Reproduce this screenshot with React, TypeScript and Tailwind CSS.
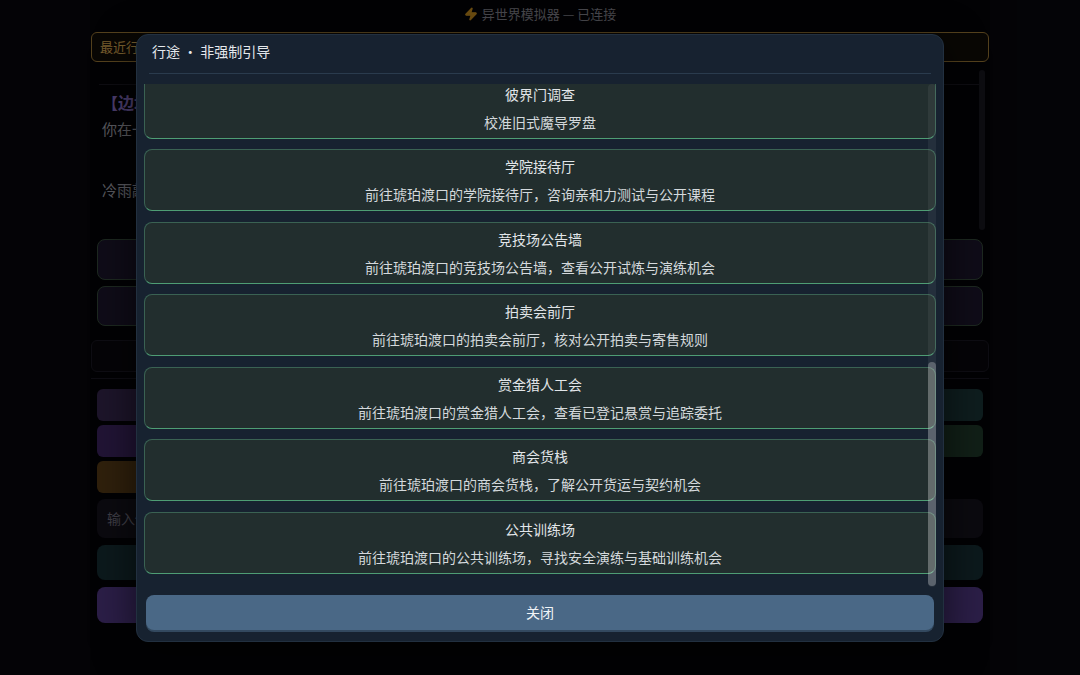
import { Zap } from 'lucide-react'

const routes = [
  { title: '彼界门调查', desc: '校准旧式魔导罗盘' },
  { title: '学院接待厅', desc: '前往琥珀渡口的学院接待厅，咨询亲和力测试与公开课程' },
  { title: '竞技场公告墙', desc: '前往琥珀渡口的竞技场公告墙，查看公开试炼与演练机会' },
  { title: '拍卖会前厅', desc: '前往琥珀渡口的拍卖会前厅，核对公开拍卖与寄售规则' },
  { title: '赏金猎人工会', desc: '前往琥珀渡口的赏金猎人工会，查看已登记悬赏与追踪委托' },
  { title: '商会货栈', desc: '前往琥珀渡口的商会货栈，了解公开货运与契约机会' },
  { title: '公共训练场', desc: '前往琥珀渡口的公共训练场，寻找安全演练与基础训练机会' }
]

function GameScreen() {
  return (
    <div className="mx-auto flex h-full w-[900px] flex-col bg-[#050408] px-[1px]">
      <div className="flex h-[28px] items-center justify-center gap-1 text-[13px] text-[#8e8e98]">
        <Zap className="h-3.5 w-3.5 fill-[#d99a22] text-[#d99a22]" />
        <span>异世界模拟器 — 已连接</span>
      </div>

      <div className="mt-[4px] flex h-[30px] items-center rounded-md border border-[#a9823a] bg-[#120e08] px-2 text-[13px] text-[#e8b85a]">
        最近行途
      </div>

      {/* story log */}
      <div className="relative mt-2 h-[162px] px-2">
        <div className="mt-[14px] border-t border-[#1c1a24]" />
        <div className="px-[3px] pt-[5px] text-[16px] font-bold text-[#9479d6]">【边境·琥珀渡口】</div>
        <div className="px-[3px] pt-[4px] text-[15px] text-[#b0b0bc]">你在一阵低沉的钟声中醒来，码头的灯火在雾里摇晃。</div>
        <div className="px-[3px] pt-[38px] text-[15px] text-[#b0b0bc]">冷雨敲打着石阶，远处传来商队的号角。</div>
        <div className="absolute right-[4px] top-0 h-[160px] w-[6px] rounded-full bg-[#1a1a22]" />
      </div>

      <div className="mt-[7px] flex flex-col gap-[6px] px-[6px]">
        <div className="h-[41px] rounded-lg border border-[#3a5140] bg-[#1e1830]" />
        <div className="h-[40px] rounded-lg border border-[#3a5140] bg-[#1e1830]" />
      </div>

      <div className="mt-[14px] h-[32px] rounded-md border border-[#1d1b26] bg-[#0a090e]" />
      <div className="mt-[6px] border-t border-[#1d1b26]" />

      <div className="mt-[10px] grid grid-cols-2 gap-x-[10px] gap-y-[4px] px-[6px]">
        <div className="h-[32px] rounded-md bg-[#3a2a54]" />
        <div className="h-[32px] rounded-md bg-[#1d3a3c]" />
        <div className="h-[32px] rounded-md bg-[#42286a]" />
        <div className="h-[32px] rounded-md bg-[#223f2e]" />
        <div className="h-[32px] rounded-md bg-[#5e4118]" />
        <div />
      </div>

      <div className="mx-[6px] mt-[6px] flex h-[39px] items-center rounded-lg bg-[#16141f] px-[10px] text-[14px] text-[#7c7a8a]">
        输入你的行动……
      </div>
      <div className="mx-[6px] mt-[7px] h-[35px] rounded-lg bg-[#183238]" />
      <div className="mx-[6px] mt-[7px] h-[36px] rounded-lg bg-[#563c8e]" />
    </div>
  )
}

function RouteDialog() {
  return (
    <div className="flex h-[608px] w-[808px] flex-col rounded-xl border border-[#223040] bg-[#172230] shadow-[0_10px_40px_rgba(0,0,0,0.6)]">
      <div className="mx-3 border-b border-[#2a3b4d] px-[3px] pb-[12px] pt-[6px] text-[14px] leading-5 text-[#e4e8ec]">
        行途 · 非强制引导
      </div>

      <div className="relative mt-[10px] h-[503px] overflow-hidden px-[7px]">
        <div className="flex h-full flex-col justify-end gap-[10.5px] pb-[13px]">
          {routes.map((r) => (
            <div
              key={r.title}
              className="flex h-[62px] shrink-0 flex-col items-center justify-center gap-2 rounded-lg border border-[#3a6253] border-b-[#4e9d74] bg-[#222e2e] text-[14px] leading-5"
            >
              <div className="text-[#e1e5e8]">{r.title}</div>
              <div className="text-[#d4d9dc]">{r.desc}</div>
            </div>
          ))}
        </div>
        {/* scrollbar */}
        <div className="absolute bottom-0 right-[7px] top-0 w-[8px] rounded-full bg-white/[0.06]">
          <div className="mt-[278px] h-[224px] rounded-full bg-white/25" />
        </div>
      </div>

      <div className="px-[9px] pt-[8px]">
        <button className="h-[35px] w-full rounded-lg bg-[#4a6886] text-[14px] text-[#f1f4f7] shadow-[0_2px_0_#33495f]">
          关闭
        </button>
      </div>
    </div>
  )
}

export default function App() {
  return (
    <div className="relative h-[675px] w-[1080px] overflow-hidden bg-[#08070d] font-['Noto_Sans_CJK_SC','Noto_Sans',sans-serif]">
      <GameScreen />
      <div className="absolute inset-0 flex items-center justify-center bg-black/50">
        <RouteDialog />
      </div>
    </div>
  )
}
